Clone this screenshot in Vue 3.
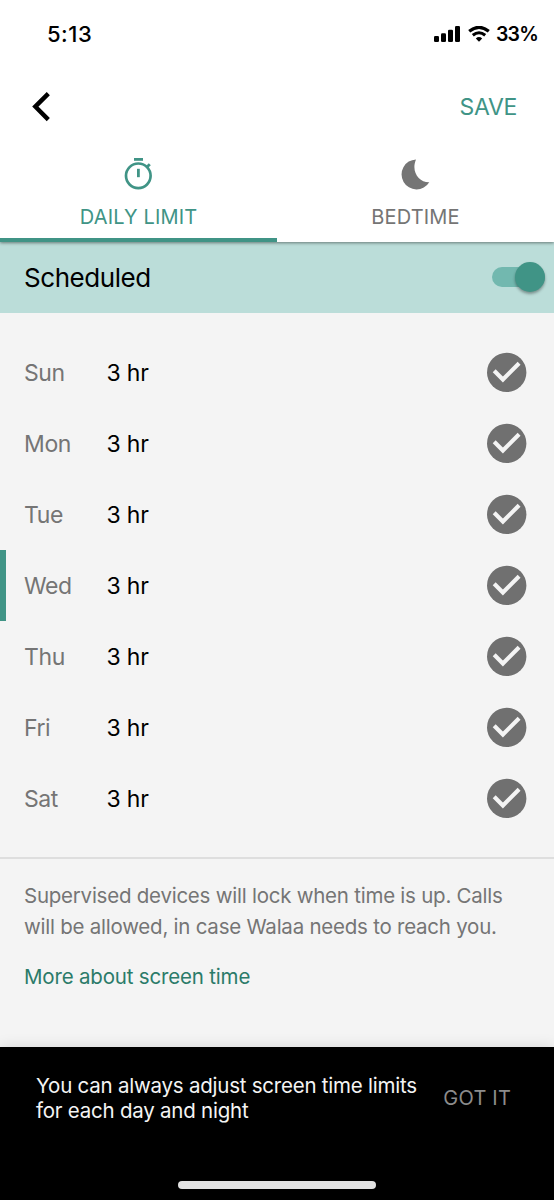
<script setup>
const days = ['Sun', 'Mon', 'Tue', 'Wed', 'Thu', 'Fri', 'Sat']
const today = 'Wed'
</script>

<template>
  <div class="screen">
    <header class="top">
      <div class="status">
        <span class="clock">5:13</span>
        <div class="indicators">
          <svg class="signal" width="26" height="16" viewBox="0 0 26 16">
            <rect x="0" y="10" width="5" height="6" rx="1.3" />
            <rect x="7" y="7.2" width="5" height="8.8" rx="1.3" />
            <rect x="14" y="3.8" width="5" height="12.2" rx="1.3" />
            <rect x="21" y="0" width="5" height="16" rx="1.3" />
          </svg>
          <svg class="wifi" width="22" height="16" viewBox="0 0 22 16">
            <path d="M1.2 5.3Q11-2.6 20.8 5.3" fill="none" stroke="#000" stroke-width="3.2" />
            <path d="M4.8 9.3Q11 4.2 17.2 9.3" fill="none" stroke="#000" stroke-width="3.1" />
            <path d="M7.8 12.4Q11 9.8 14.2 12.4L11 15.8Z" />
          </svg>
          <span class="battery">33%</span>
        </div>
      </div>
      <div class="bar">
        <svg class="back" width="18" height="30" viewBox="0 0 18 30">
          <path d="M16.3 1.6L3.3 14.6L16.3 27.6" fill="none" stroke="#000" stroke-width="4.4" />
        </svg>
        <span class="save">SAVE</span>
      </div>
      <nav class="tabs">
        <div class="tab active">
          <svg width="30" height="34" viewBox="0 0 30 34">
            <g fill="none" stroke="#409486">
              <circle cx="14.3" cy="19.8" r="12.3" stroke-width="2.7" />
              <path d="M10 3.4H19" stroke-width="2.8" />
              <path d="M14.4 12.8V21.2" stroke-width="2.8" />
              <path d="M22.5 11.6L25.8 8.3" stroke-width="2.8" />
            </g>
          </svg>
          <span class="label">DAILY LIMIT</span>
        </div>
        <div class="tab">
          <svg width="30" height="34" viewBox="0 0 30 34">
            <path d="M15 3.4A15 15 0 1 0 28.3 26.3C18.3 26.6 9.7 16 15 3.4Z" fill="#757575" />
          </svg>
          <span class="label">BEDTIME</span>
        </div>
      </nav>
    </header>

    <section class="scheduled">
      <span class="title">Scheduled</span>
      <div class="switch"><div class="thumb"></div></div>
    </section>

    <main class="days">
      <div v-for="day in days" :key="day" class="row" :class="{ today: day === today }">
        <span class="day">{{ day }}</span>
        <span class="hours">3 hr</span>
        <svg class="check" width="40" height="41" viewBox="0 0 40 41">
          <circle cx="19.7" cy="20.4" r="19.7" fill="#707070" />
          <path d="M7.2 18.8L15.9 27.5L32.1 11.3" fill="none" stroke="#f4f4f4" stroke-width="4.1" />
        </svg>
      </div>
    </main>

    <section class="info">
      <p>
        Supervised devices will lock when time is up. Calls<br />
        will be allowed, in case Walaa needs to reach you.
      </p>
      <a class="more">More about screen time</a>
    </section>

    <footer class="snackbar">
      <div class="message">
        <p>
          You can always adjust screen time limits<br />
          for each day and night
        </p>
        <span class="got">GOT IT</span>
      </div>
      <div class="home"></div>
    </footer>
  </div>
</template>

<style>
body {
  margin: 0;
}
</style>

<style scoped>
.screen {
  width: 554px;
  height: 1200px;
  display: flex;
  flex-direction: column;
  overflow: hidden;
  background: #f4f4f4;
  font-family: Inter, "Liberation Sans", sans-serif;
  color: #000;
  white-space: nowrap;
}
p {
  margin: 0;
}
svg {
  display: block;
}
.top {
  position: relative;
  z-index: 1;
  height: 242px;
  flex: none;
  background: #fff;
  box-shadow: 0 1px 3px rgba(0, 0, 0, 0.45);
}
.status {
  height: 68px;
  padding: 0 16px 0 47px;
  display: flex;
  align-items: center;
  justify-content: space-between;
}
.clock {
  font-size: 22px;
  font-weight: 500;
  letter-spacing: 0.5px;
}
.indicators {
  display: flex;
  align-items: center;
  gap: 7.5px;
}
.battery {
  font-size: 19.5px;
  font-weight: 600;
  letter-spacing: -0.8px;
  margin-left: -1px;
}
.bar {
  height: 76px;
  box-sizing: border-box;
  display: flex;
  align-items: center;
  justify-content: space-between;
  padding: 2px 37px 0 32px;
}
.back {
  margin-bottom: 1px;
}
.save {
  font-size: 23px;
  letter-spacing: -0.3px;
  color: #409486;
}
.tabs {
  display: flex;
  height: 98px;
}
.tab {
  flex: 1;
  box-sizing: border-box;
  padding-top: 12px;
  display: flex;
  flex-direction: column;
  align-items: center;
  color: #757575;
  border-bottom: 0 solid #409486;
}
.tab.active {
  color: #409486;
  border-bottom-width: 4px;
}
.label {
  margin-top: 14px;
  font-size: 20px;
  letter-spacing: 0.15px;
  line-height: 26px;
}
.scheduled {
  height: 71px;
  flex: none;
  background: #bbddd9;
  display: flex;
  align-items: center;
  justify-content: space-between;
  padding: 0 9px 0 24px;
}
.title {
  font-size: 26px;
  letter-spacing: -0.45px;
}
.switch {
  width: 53px;
  height: 20px;
  margin-bottom: 1px;
  border-radius: 10px;
  background: #72b8af;
  display: flex;
  align-items: center;
  justify-content: flex-end;
}
.thumb {
  width: 30px;
  height: 30px;
  border-radius: 50%;
  background: #409486;
  box-shadow: 0 2px 3px rgba(0, 0, 0, 0.35);
}
.days {
  padding: 24px 0 36px;
  flex: none;
  border-bottom: 2px solid #dedede;
  height: 484px;
}
.row {
  height: 71px;
  box-sizing: border-box;
  display: flex;
  align-items: center;
  padding: 0 27px 0 18px;
  border-left: 6px solid transparent;
}
.row.today {
  border-left-color: #409486;
}
.day {
  width: 82.5px;
  font-size: 23px;
  letter-spacing: -0.4px;
  color: #757575;
}
.hours {
  font-size: 23px;
  letter-spacing: -0.2px;
}
.check {
  margin-left: auto;
}
.info {
  flex: 1;
  padding: 22px 24px 0;
  font-size: 20.5px;
  letter-spacing: -0.24px;
  line-height: 30.5px;
  color: #757575;
}
.more {
  display: block;
  margin-top: 19.5px;
  letter-spacing: -0.18px;
  color: #2b7b69;
}
.snackbar {
  height: 153px;
  flex: none;
  background: #000;
  box-shadow: 0 0 14px rgba(0, 0, 0, 0.12);
  display: flex;
  flex-direction: column;
  align-items: center;
  justify-content: space-between;
}
.message {
  align-self: stretch;
  padding: 26px 43px 0 36px;
  display: flex;
  align-items: center;
  justify-content: space-between;
  color: #f4f4f4;
  font-size: 20.5px;
  letter-spacing: -0.23px;
  line-height: 25px;
}
.got {
  font-size: 20px;
  letter-spacing: 0.2px;
  color: #8c8c8c;
}
.home {
  width: 198px;
  height: 8px;
  margin-bottom: 11px;
  border-radius: 4px;
  background: #e2e2e2;
}
</style>
